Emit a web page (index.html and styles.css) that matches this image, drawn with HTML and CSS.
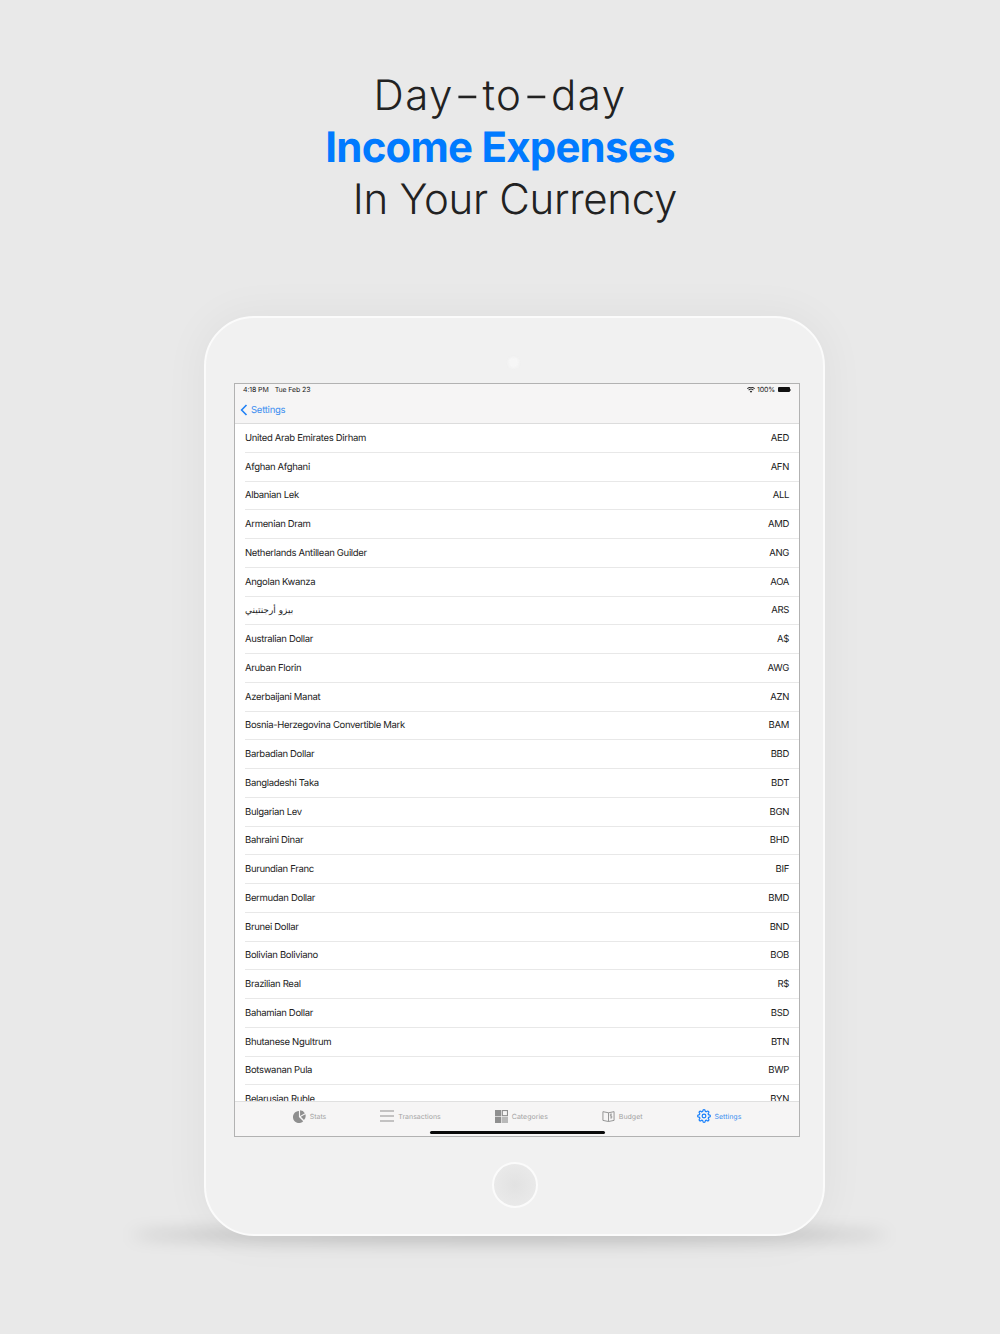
FILE: index.html
```html
<!DOCTYPE html>
<html lang="en">
<head>
<meta charset="utf-8">
<title>Day-to-day Income Expenses</title>
<link rel="stylesheet" href="styles.css">
</head>
<body>
<main class="page">
  <h1 class="headline">
    <span class="line wide-line">Day<span class="dash">-</span>to<span class="dash">-</span>day</span>
    <span class="line accent">Income Expenses</span>
    <span class="line shifted">In Your Currency</span>
  </h1>
  <section class="device">
    <div class="camera"></div>
    <div class="screen">
      <header class="topbar">
        <div class="status">
          <span class="clock">4:18 PM</span><span class="date">Tue Feb 23</span>
          <span class="status-right">
            <svg class="wifi" viewBox="0 0 16 12"><path d="M8 11.500 5.600 8.800a3.400 3.400 0 0 1 4.800 0zM3.900 7.100 2.600 5.600a7.600 7.600 0 0 1 10.800 0l-1.300 1.500a5.700 5.700 0 0 0-8.200 0zM1.300 4.200 0 2.800a11.400 11.400 0 0 1 16 0l-1.300 1.400a9.600 9.600 0 0 0-13.400 0z"/></svg>
            <span>100%</span>
            <span class="battery"></span>
          </span>
        </div>
        <nav class="back">
          <svg class="chevron" viewBox="0 0 8 13"><path d="M6.700 1 1.400 6.500l5.300 5.500"/></svg>
          <span>Settings</span>
        </nav>
      </header>
      <ul class="list">
        <li class="row"><span>United Arab Emirates Dirham</span><span>AED</span></li>
        <li class="row"><span>Afghan Afghani</span><span>AFN</span></li>
        <li class="row"><span>Albanian Lek</span><span>ALL</span></li>
        <li class="row"><span>Armenian Dram</span><span>AMD</span></li>
        <li class="row"><span>Netherlands Antillean Guilder</span><span>ANG</span></li>
        <li class="row"><span>Angolan Kwanza</span><span>AOA</span></li>
        <li class="row"><span class="arabic" dir="rtl">بيزو أرجنتيني</span><span>ARS</span></li>
        <li class="row"><span>Australian Dollar</span><span>A$</span></li>
        <li class="row"><span>Aruban Florin</span><span>AWG</span></li>
        <li class="row"><span>Azerbaijani Manat</span><span>AZN</span></li>
        <li class="row"><span>Bosnia-Herzegovina Convertible Mark</span><span>BAM</span></li>
        <li class="row"><span>Barbadian Dollar</span><span>BBD</span></li>
        <li class="row"><span>Bangladeshi Taka</span><span>BDT</span></li>
        <li class="row"><span>Bulgarian Lev</span><span>BGN</span></li>
        <li class="row"><span>Bahraini Dinar</span><span>BHD</span></li>
        <li class="row"><span>Burundian Franc</span><span>BIF</span></li>
        <li class="row"><span>Bermudan Dollar</span><span>BMD</span></li>
        <li class="row"><span>Brunei Dollar</span><span>BND</span></li>
        <li class="row"><span>Bolivian Boliviano</span><span>BOB</span></li>
        <li class="row"><span>Brazilian Real</span><span>R$</span></li>
        <li class="row"><span>Bahamian Dollar</span><span>BSD</span></li>
        <li class="row"><span>Bhutanese Ngultrum</span><span>BTN</span></li>
        <li class="row"><span>Botswanan Pula</span><span>BWP</span></li>
        <li class="row"><span>Belarusian Ruble</span><span>BYN</span></li>
      </ul>
      <footer class="tabbar">
        <div class="tab">
          <svg class="icon" viewBox="0 0 14 14"><path class="fill" d="M6.400 1.200v6.400l4.600 4.400A6.400 6.400 0 1 1 6.400 1.200z"/><path class="fill" d="M7.600 6.400V.4a6.200 6.200 0 0 1 5.200 3z"/><path class="fill" d="M8.400 7.200l5-2.600a6.300 6.300 0 0 1-1.600 6.200z"/></svg>
          <span>Stats</span>
        </div>
        <div class="tab">
          <svg class="icon wide" viewBox="0 0 14 12"><path class="bars" d="M0 1h14M0 6h14M0 11h14"/></svg>
          <span>Transactions</span>
        </div>
        <div class="tab">
          <svg class="icon" viewBox="0 0 12 12"><rect class="fill" width="5.700" height="5.700"/><rect class="open" x="6.800" y=".5" width="4.700" height="4.700"/><rect class="fill" y="6.300" width="5.700" height="5.700"/><rect class="fill soft" x="6.300" y="6.300" width="5.700" height="5.700"/></svg>
          <span>Categories</span>
        </div>
        <div class="tab">
          <svg class="icon" viewBox="0 0 14 12"><path class="open" d="M7 2 1 .8v9.400l6 1.200 6-1.200V.8z M7 2v9.400"/><path class="open thin" d="M10.500 3.500H9v2h1.500v2H9M9.800 2.800v5.500"/></svg>
          <span>Budget</span>
        </div>
        <div class="tab active">
          <svg class="icon gear" viewBox="0 0 24 24"><circle cx="12" cy="12" r="3.200"/><path d="M19.400 15a1.650 1.650 0 0 0 .33 1.820l.06.060a2 2 0 1 1-2.830 2.830l-.06-.060a1.650 1.650 0 0 0-2.800 1.170V21a2 2 0 1 1-4 0v-.090A1.650 1.650 0 0 0 7.180 19.740l-.060.060a2 2 0 1 1-2.830-2.830l.060-.060A1.650 1.650 0 0 0 3.090 14H3a2 2 0 1 1 0-4h.090A1.650 1.650 0 0 0 4.260 7.180l-.060-.060a2 2 0 1 1 2.830-2.830l.060.060A1.650 1.650 0 0 0 10 3.090V3a2 2 0 1 1 4 0v.090a1.650 1.650 0 0 0 2.820 1.170l.060-.060a2 2 0 1 1 2.830 2.830l-.060.060A1.650 1.650 0 0 0 20.910 10H21a2 2 0 1 1 0 4h-.090a1.650 1.650 0 0 0-1.510 1z"/></svg>
          <span>Settings</span>
        </div>
        <div class="home-bar"></div>
      </footer>
    </div>
    <div class="home-button"></div>
  </section>
</main>
</body>
</html>
```
FILE: styles.css
```css
* { box-sizing: border-box; }
html, body { margin: 0; padding: 0; }
body {
  background: #e9e9e9;
  font-family: "Inter", "Liberation Sans", sans-serif;
  color: #1d1d1d;
  text-rendering: geometricPrecision;
}
.page {
  width: 1000px;
  height: 1334px;
  overflow: hidden;
  display: flex;
  flex-direction: column;
  align-items: center;
  padding-top: 70px;
}
.headline {
  margin: 0;
  font-size: 42px;
  font-weight: 300;
  line-height: 52px;
  letter-spacing: -0.3px;
  text-align: center;
  color: #222;
}
.line { display: block; }
.wide-line { letter-spacing: 1.500px; }
.dash {
  display: inline-block;
  margin: 0 4px;
  transform: scaleX(1.400);
}
.accent { color: #007aff; font-weight: 700; letter-spacing: -0.8px; }
.shifted { padding-left: 30px; }
.device {
  position: relative;
  width: 621px;
  height: 920px;
  margin: 90px 0 0 29px;
  padding: 65px 24px 0 28px;
  background: #f1f1f1;
  border: 2px solid #fbfbfb;
  border-radius: 50px;
  box-shadow: 0 0 40px 6px rgba(0, 0, 0, 0.04);
}
.device::after {
  content: "";
  position: absolute;
  left: -75px;
  right: -65px;
  bottom: -8px;
  height: 14px;
  z-index: -1;
  border-radius: 50%;
  background: rgba(0, 0, 0, 0.18);
  filter: blur(8px);
}
.camera {
  position: absolute;
  top: 39px;
  left: 302px;
  width: 11px;
  height: 11px;
  border-radius: 50%;
  background: #f6f6f6;
  filter: blur(1px);
}
.screen {
  position: relative;
  width: 566px;
  height: 754px;
  display: flex;
  flex-direction: column;
  background: #fff;
  border: 1px solid #b2b2b2;
  overflow: hidden;
}
.topbar {
  flex: none;
  height: 40px;
  background: #f6f5f5;
  border-bottom: 1px solid #dcdcdc;
}
.status {
  display: flex;
  align-items: center;
  height: 11px;
  padding: 0 8px;
  font-size: 7px;
  letter-spacing: -0.12px;
  color: #222;
}
.date { margin-left: 6px; }
.status-right {
  margin-left: auto;
  display: flex;
  align-items: center;
  gap: 2px;
}
.wifi { width: 8px; height: 6px; fill: #222; }
.battery {
  position: relative;
  width: 12px;
  height: 5px;
  margin: 0 1px;
  background: #111;
  border-radius: 1px;
}
.battery::after {
  content: "";
  position: absolute;
  top: 1.500px;
  right: -1px;
  width: 1px;
  height: 2px;
  background: #888;
}
.back {
  display: flex;
  align-items: center;
  gap: 3px;
  height: 28px;
  padding: 1px 0 0 5px;
  font-size: 9.500px;
  letter-spacing: -0.25px;
  color: #3b8ef0;
}
.back span { padding-top: 1px; }
.chevron {
  width: 8px;
  height: 12px;
  fill: none;
  stroke: #1f80f5;
  stroke-width: 1.700;
}
.list {
  flex: 1;
  min-height: 0;
  margin: 0;
  padding: 0;
  list-style: none;
  overflow: hidden;
}
.row {
  display: flex;
  justify-content: space-between;
  align-items: center;
  height: 28.75px;
  margin-left: 10px;
  padding: 1px 10px 0 0;
  border-bottom: 1px solid #e8e8e8;
  font-size: 9.500px;
  letter-spacing: -0.32px;
  color: #222;
}
.arabic { font-family: "DejaVu Sans", sans-serif; font-size: 9px; letter-spacing: 0; }
.tabbar {
  position: relative;
  flex: none;
  height: 35px;
  display: flex;
  justify-content: center;
  gap: 54px;
  padding-top: 7px;
  background: #f6f5f5;
  border-top: 1px solid #e0e0e0;
  font-size: 7px;
  color: #a3a3a3;
}
.tab {
  display: flex;
  align-items: center;
  gap: 4px;
  height: 14px;
}
.icon { width: 13px; height: 13px; flex: none; }
.icon.wide { width: 14px; height: 12px; }
.fill { fill: #8f8f8f; }
.soft { fill: #b9b9b9; }
.open { fill: none; stroke: #8f8f8f; stroke-width: 1; }
.thin { stroke-width: 0.7; }
.bars { fill: none; stroke: #8f8f8f; stroke-width: 1.200; }
.active { color: #3b8ef0; }
.gear {
  fill: none;
  stroke: #147efb;
  stroke-width: 2;
  width: 14px;
  height: 14px;
}
.home-bar {
  position: absolute;
  left: 195px;
  bottom: 2px;
  width: 175px;
  height: 3px;
  border-radius: 2px;
  background: #0a0a0a;
}
.home-button {
  width: 46px;
  height: 46px;
  margin: 25px 0 0 258px;
  border: 2px solid #fbfbfb;
  border-radius: 50%;
  background: radial-gradient(circle, #e2e2e2, #ececec);
}
```
